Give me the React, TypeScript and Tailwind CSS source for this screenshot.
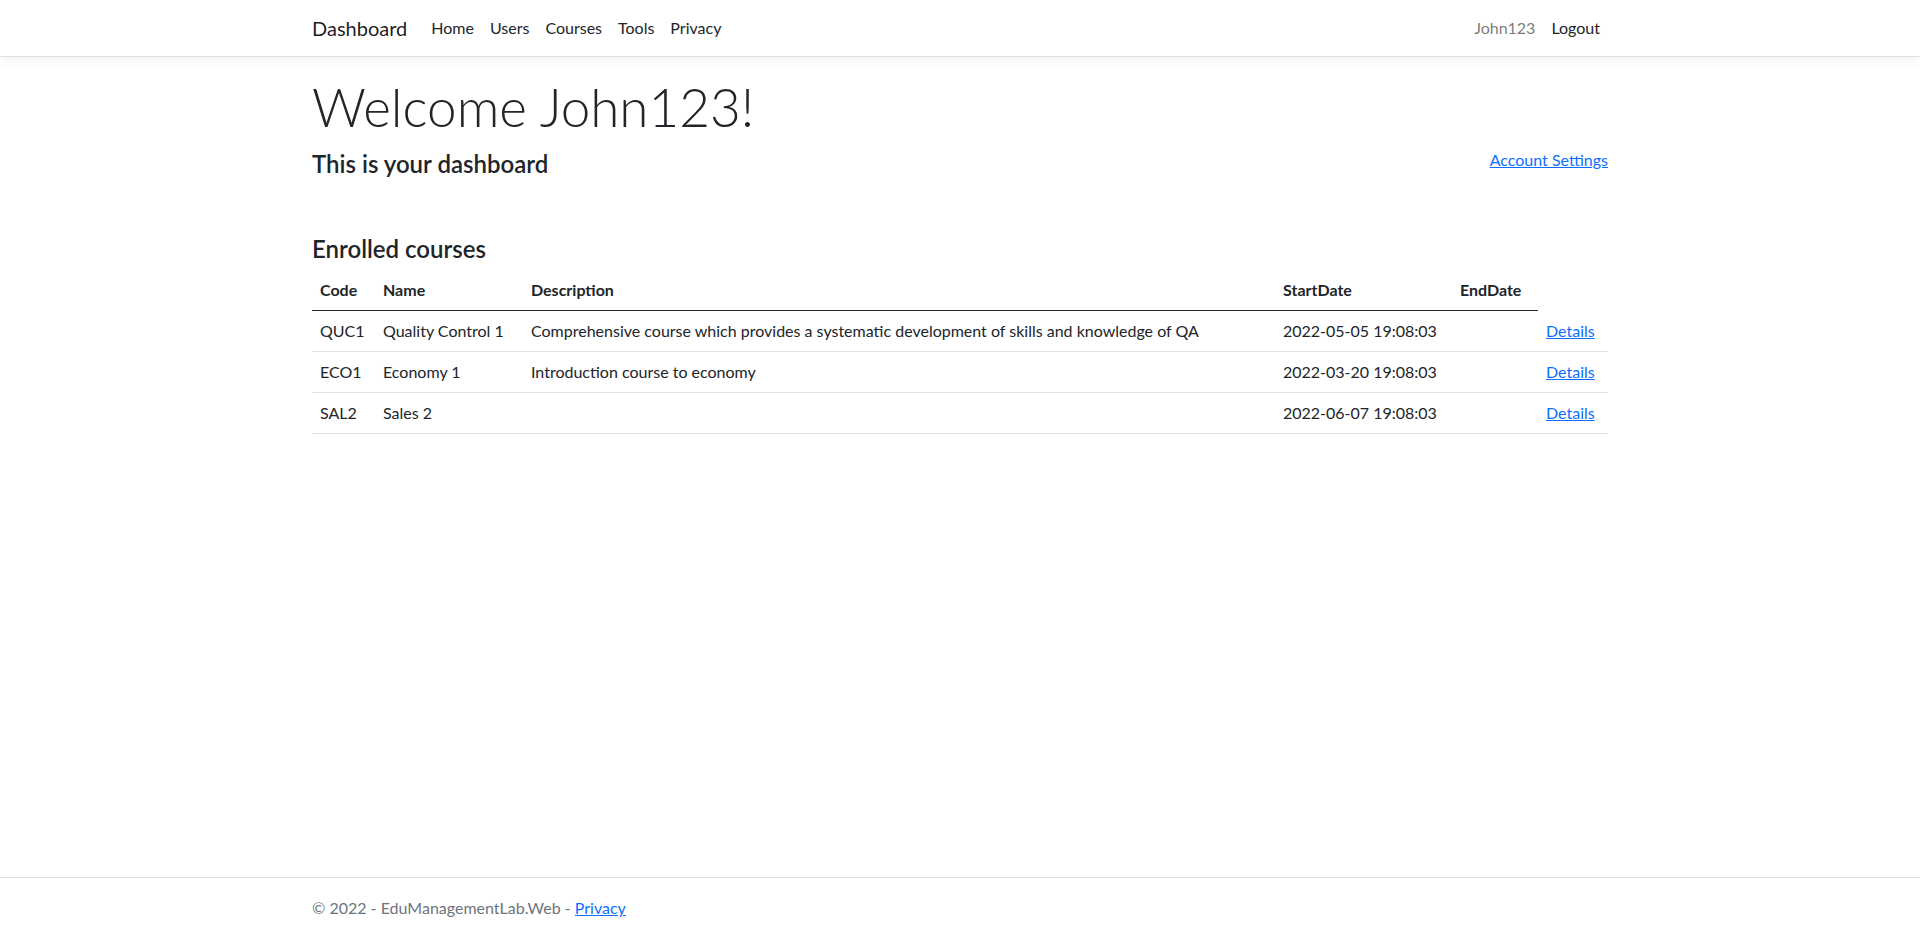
export default function App() {
  const rows = [
    { code: "QUC1", name: "Quality Control 1", desc: "Comprehensive course which provides a systematic development of skills and knowledge of QA", start: "2022-05-05 19:08:03" },
    { code: "ECO1", name: "Economy 1", desc: "Introduction course to economy", start: "2022-03-20 19:08:03" },
    { code: "SAL2", name: "Sales 2", desc: "", start: "2022-06-07 19:08:03" },
  ];
  return (
    <div className="min-h-[938px] flex flex-col bg-white text-[#212529] font-['Lato','Liberation_Sans',sans-serif] text-[16px] leading-[24px]">
      <nav className="bg-white border-b border-[#dee2e6] shadow-[0_4px_12px_rgba(0,0,0,0.05)] mb-4">
        <div className="w-[1320px] mx-auto px-3 py-2 flex items-center">
          <a className="text-[20px] leading-[30px] py-[5px] mr-4 text-[rgba(0,0,0,0.9)]">Dashboard</a>
          <ul className="flex items-center">
            {["Home", "Users", "Courses", "Tools", "Privacy"].map((l) => (
              <li key={l}>
                <a className="block px-2 py-2 text-[#212529]">{l}</a>
              </li>
            ))}
          </ul>
          <ul className="flex items-center ml-auto">
            <li>
              <a className="block px-2 py-2 text-[rgba(0,0,0,0.55)]">John123</a>
            </li>
            <li>
              <a className="block px-2 py-2 text-[#212529]">Logout</a>
            </li>
          </ul>
        </div>
      </nav>
      <main className="w-[1320px] mx-auto px-3 pb-4">
        <h1 className="text-[53px] font-light leading-[67px] mb-2">Welcome John123!</h1>
        <div className="flex items-start justify-between">
          <h4 className="text-[24px] font-semibold leading-[29px] mb-2 mt-[1px]">This is your dashboard</h4>
          <a className="text-[#0d6efd] underline">Account Settings</a>
        </div>
        <h4 className="text-[24px] font-semibold leading-[29px] mt-[48px] mb-[7px]">Enrolled courses</h4>
        <table className="w-full table-fixed border-collapse mb-4">
          <colgroup>
            <col className="w-[63px]" />
            <col className="w-[148px]" />
            <col className="w-[752px]" />
            <col className="w-[177px]" />
            <col className="w-[86px]" />
            <col className="w-[70px]" />
          </colgroup>
          <thead>
            <tr>
              {["Code", "Name", "Description", "StartDate", "EndDate"].map((h) => (
                <th key={h} className="text-left font-bold p-2 border-b border-[#212529]">{h}</th>
              ))}
            </tr>
          </thead>
          <tbody>
            {rows.map((r) => (
              <tr key={r.code}>
                <td className="p-2 border-b border-[#dee2e6]">{r.code}</td>
                <td className="p-2 border-b border-[#dee2e6] whitespace-nowrap">{r.name}</td>
                <td className="p-2 border-b border-[#dee2e6] whitespace-nowrap">{r.desc}</td>
                <td className="p-2 border-b border-[#dee2e6] whitespace-nowrap">{r.start}</td>
                <td className="p-2 border-b border-[#dee2e6]"></td>
                <td className="p-2 border-b border-[#dee2e6]">
                  <a className="text-[#0d6efd] underline">Details</a>
                </td>
              </tr>
            ))}
          </tbody>
        </table>
      </main>
      <footer className="mt-auto border-t border-[#dee2e6] text-[#6c757d] leading-[60px] whitespace-nowrap">
        <div className="w-[1320px] mx-auto px-3">
          © 2022 - EduManagementLab.Web - <a className="text-[#0d6efd] underline">Privacy</a>
        </div>
      </footer>
    </div>
  );
}
